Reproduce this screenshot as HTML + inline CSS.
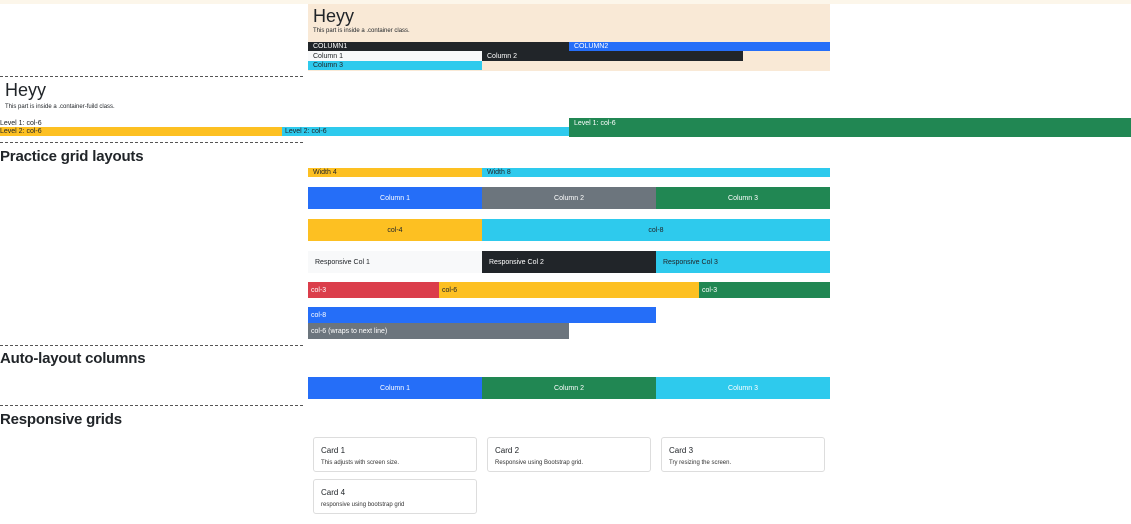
<!DOCTYPE html>
<html><head><meta charset="utf-8"><style>
*{margin:0;padding:0;box-sizing:border-box}
body{width:1131px;height:524px;position:relative;overflow:hidden;background:#fff;font-family:"Liberation Sans",sans-serif;color:#212529}
.a{position:absolute;font-size:7px;line-height:9px;white-space:nowrap;overflow:hidden}
.c{display:flex;align-items:center;justify-content:center}
.l{display:flex;align-items:center}
.hr{position:absolute;left:0;width:303px;border-top:1px dashed #555;height:0}
.h{position:absolute;font-size:15px;font-weight:bold;color:#212529;letter-spacing:-0.2px;line-height:18px}
.card{position:absolute;width:164px;height:35px;border:1px solid #ddd;border-radius:3px;padding:8px 7px 0}
.card b{display:block;font-size:8px;line-height:10px;font-weight:normal;color:#212529;margin-bottom:3px}
.card span{display:block;font-size:6px;line-height:8px;color:#333}
</style></head><body>
<div class="a" style="left:0;top:0;width:1131px;height:4px;background:#fcf6ea"></div>
<div class="a" style="left:308px;top:4px;width:522px;height:67px;background:#f9e9d6"></div>
<div class="a" style="left:313px;top:6px;font-size:18px;line-height:20px">Heyy</div>
<div class="a" style="left:313px;top:27px;font-size:6px">This part is inside a .container class.</div>
<div class="a l" style="left:308px;top:42px;width:261px;height:9px;background:#212529;color:#fff;padding-left:5px">COLUMN1</div>
<div class="a l" style="left:569px;top:42px;width:261px;height:9px;background:#256ef8;color:#fff;padding-left:5px">COLUMN2</div>
<div class="a l" style="left:308px;top:51px;width:174px;height:10px;background:#f8f9fa;padding-left:5px">Column 1</div>
<div class="a l" style="left:482px;top:51px;width:261px;height:10px;background:#212529;color:#fff;padding-left:5px">Column 2</div>
<div class="a l" style="left:308px;top:61px;width:174px;height:9px;background:#2ecaed;padding-left:5px">Column 3</div>
<div class="hr" style="top:76px"></div>
<div class="a" style="left:5px;top:80px;font-size:18px;line-height:20px">Heyy</div>
<div class="a" style="left:5px;top:103px;font-size:6px">This part is inside a .container-fuild class.</div>
<div class="a" style="left:0;top:119px">Level 1: col-6</div>
<div class="a" style="left:569px;top:118px;width:562px;height:19px;background:#218753;color:#fff;padding:1px 5px">Level 1: col-6</div>
<div class="a l" style="left:0;top:127px;width:282px;height:9px;background:#fdc022">Level 2: col-6</div>
<div class="a l" style="left:282px;top:127px;width:287px;height:9px;background:#2ecaed;padding-left:3px">Level 2: col-6</div>
<div class="hr" style="top:142px"></div>
<div class="h" style="left:0;top:148px">Practice grid layouts</div>
<div class="a l" style="left:308px;top:168px;width:174px;height:9px;background:#fdc022;padding-left:5px">Width 4</div>
<div class="a l" style="left:482px;top:168px;width:348px;height:9px;background:#2ecaed;padding-left:5px">Width 8</div>
<div class="a c" style="left:308px;top:187px;width:174px;height:22px;background:#256ef8;color:#fff">Column 1</div>
<div class="a c" style="left:482px;top:187px;width:174px;height:22px;background:#6c757d;color:#fff">Column 2</div>
<div class="a c" style="left:656px;top:187px;width:174px;height:22px;background:#218753;color:#fff">Column 3</div>
<div class="a c" style="left:308px;top:219px;width:174px;height:22px;background:#fdc022">col-4</div>
<div class="a c" style="left:482px;top:219px;width:348px;height:22px;background:#2ecaed">col-8</div>
<div class="a l" style="left:308px;top:251px;width:174px;height:22px;background:#f8f9fa;padding-left:7px">Responsive Col 1</div>
<div class="a l" style="left:482px;top:251px;width:174px;height:22px;background:#212529;color:#fff;padding-left:7px">Responsive Col 2</div>
<div class="a l" style="left:656px;top:251px;width:174px;height:22px;background:#2ecaed;padding-left:7px">Responsive Col 3</div>
<div class="a l" style="left:308px;top:282px;width:131px;height:16px;background:#db3e4b;color:#fff;padding-left:3px">col-3</div>
<div class="a l" style="left:439px;top:282px;width:260px;height:16px;background:#fdc022;padding-left:3px">col-6</div>
<div class="a l" style="left:699px;top:282px;width:131px;height:16px;background:#218753;color:#fff;padding-left:3px">col-3</div>
<div class="a l" style="left:308px;top:307px;width:348px;height:16px;background:#256ef8;color:#fff;padding-left:3px">col-8</div>
<div class="a l" style="left:308px;top:323px;width:261px;height:16px;background:#6c757d;color:#fff;padding-left:3px">col-6 (wraps to next line)</div>
<div class="hr" style="top:345px"></div>
<div class="h" style="left:0;top:350px">Auto-layout columns</div>
<div class="a c" style="left:308px;top:377px;width:174px;height:22px;background:#256ef8;color:#fff">Column 1</div>
<div class="a c" style="left:482px;top:377px;width:174px;height:22px;background:#218753;color:#fff">Column 2</div>
<div class="a c" style="left:656px;top:377px;width:174px;height:22px;background:#2ecaed;color:#fff">Column 3</div>
<div class="hr" style="top:405px"></div>
<div class="h" style="left:0;top:411px">Responsive grids</div>
<div class="card" style="left:313px;top:437px"><b>Card 1</b><span>This adjusts with screen size.</span></div>
<div class="card" style="left:487px;top:437px"><b>Card 2</b><span>Responsive using Bootstrap grid.</span></div>
<div class="card" style="left:661px;top:437px"><b>Card 3</b><span>Try resizing the screen.</span></div>
<div class="card" style="left:313px;top:479px"><b>Card 4</b><span>responsive using bootstrap grid</span></div>
</body></html>
